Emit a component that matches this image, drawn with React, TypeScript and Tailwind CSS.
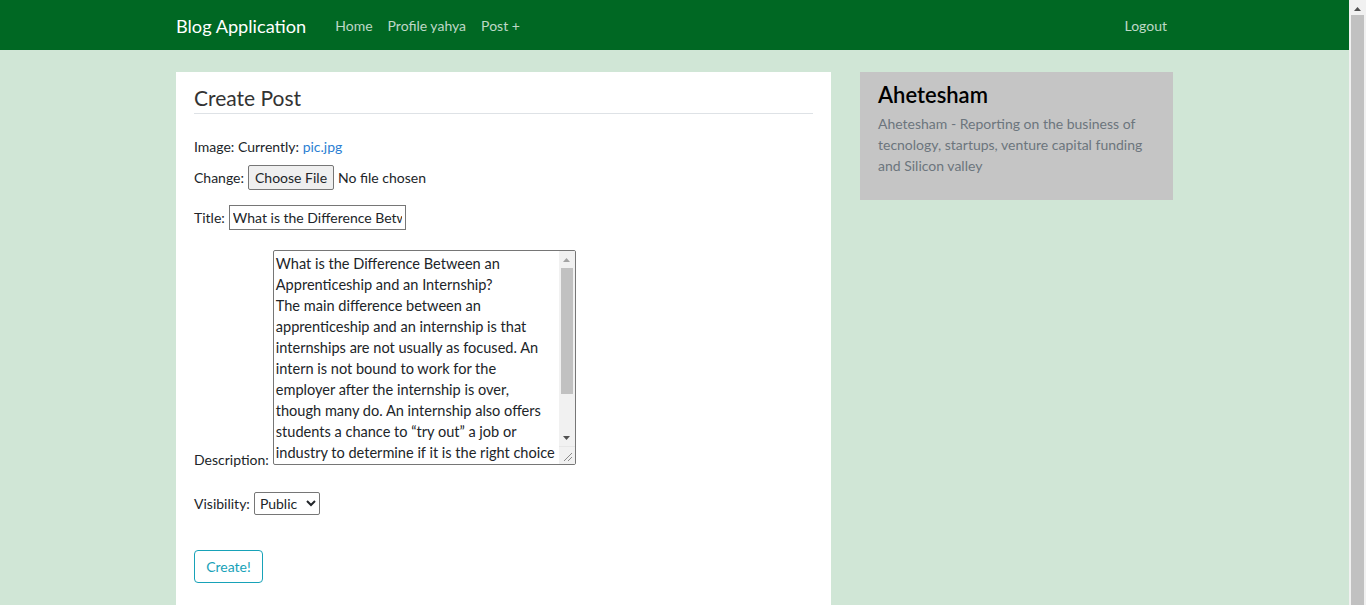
import React from 'react';

const body =
  'What is the Difference Between an Apprenticeship and an Internship?\nThe main difference between an apprenticeship and an internship is that internships are not usually as focused. An intern is not bound to work for the employer after the internship is over, though many do. An internship also offers students a chance to \u201ctry out\u201d a job or industry to determine if it is the right choice for them before committing to it.';

const Arrow = ({ up, color }: { up?: boolean; color: string }) => (
  <svg width="7" height="4" viewBox="0 0 7 4">
    <path d={up ? 'M0 4 L3.5 0 L7 4 Z' : 'M0 0 L3.5 4 L7 0 Z'} fill={color} />
  </svg>
);

const App = () => {
  return (
    <div className="h-screen flex overflow-hidden bg-[#d0e6d6] font-['Lato','Liberation_Sans',sans-serif] text-[14px] text-[#212529]">
      <div className="flex-1 min-w-0">
        <nav className="h-[50px] bg-[#006823]">
          <div className="w-[997px] mx-auto h-full flex items-center pt-[3px]">
            <span className="text-[18.2px] text-white">Blog Application</span>
            <div className="ml-[29px] mb-[2px] flex gap-[15px] text-white/75">
              <span>Home</span>
              <span>Profile yahya</span>
              <span>Post +</span>
            </div>
            <span className="ml-auto mr-[6px] mb-[2px] text-white/75">Logout</span>
          </div>
        </nav>

        <div className="w-[997px] mx-auto flex gap-[29px] pt-[22px]">
          <main className="w-[655px] min-h-[560px] bg-white px-[18px] pt-[12px]">
            <h2 className="text-[21px] leading-[27px] pb-[2px] border-b border-[#dee2e6] text-[#333]">Create Post</h2>

            <form className="flex flex-col items-start">
              <p className="mt-[22px] leading-[21px]">
                Image: Currently: <a className="text-[#2b7fd3]">pic.jpg</a>
              </p>
              <div className="mt-[8px] flex items-center gap-[4px]">
                <label>Change:</label>
                <input type="file" className="text-[14px] file:mr-[4px] file:h-[25px] file:px-[6px] file:border file:border-[#767676] file:rounded-[2px] file:bg-[#efefef] file:text-[#212529]" />
              </div>
              <div className="mt-[15px] flex items-center gap-[4px]">
                <label>Title:</label>
                <input
                  type="text"
                  defaultValue="What is the Difference Between an Apprenticeship and an Internship?"
                  className="w-[177px] h-[25px] border border-[#767676] px-[3px] text-[14px]"
                />
              </div>
              <div className="mt-[20px] flex items-end gap-[4px]">
                <label className="leading-[21px] -mb-[5px]">Description:</label>
                <div className="w-[303px] h-[215px] border border-[#767676] rounded-[2px] flex overflow-hidden">
                  <textarea
                    defaultValue={body}
                    className="flex-1 h-full p-[2px] text-[14.55px] leading-[21px] resize-none outline-none overflow-hidden"
                  />
                  <div className="w-[16px] flex flex-col items-center bg-[#f1f1f1]">
                    <div className="h-[17px] flex items-center justify-center">
                      <Arrow up color="#a3a3a3" />
                    </div>
                    <div className="w-[12px] h-[126px] bg-[#c1c1c1]" />
                    <div className="flex-1" />
                    <div className="h-[17px] flex items-center justify-center">
                      <Arrow color="#505050" />
                    </div>
                    <div className="w-[16px] h-[18px] flex items-end justify-end bg-[#f1f1f1] border-t border-[#e6e6e6]">
                      <svg width="11" height="11" viewBox="0 0 11 11" className="mb-[2px] mr-[2px]">
                        <path d="M10 2 L2 10 M10 6 L6 10" stroke="#8a8a8a" strokeWidth="1" />
                      </svg>
                    </div>
                  </div>
                </div>
              </div>
              <div className="mt-[27px] flex items-center gap-[4px]">
                <label>Visibility:</label>
                <select className="h-[23px] w-[66px] border border-[#767676] rounded-[2px] text-[14px] px-[1px]" defaultValue="public">
                  <option value="public">Public</option>
                  <option value="private">Private</option>
                </select>
              </div>
              <button type="button" className="mt-[35px] w-[69px] h-[33px] border border-[#17a2b8] rounded-[4px] text-[#17a2b8] text-[14px]">
                Create!
              </button>
            </form>
          </main>

          <aside className="w-[313px] h-[128px] bg-[#c5c5c5] px-[18px] pt-[9px]">
            <h3 className="text-[22px] leading-[28px] font-semibold text-black">Ahetesham</h3>
            <p className="mt-[4px] leading-[21px] text-[#6c757d]">
              Ahetesham - Reporting on the business of tecnology, startups, venture capital funding and Silicon valley
            </p>
          </aside>
        </div>
      </div>

      <div className="w-[17px] flex flex-col items-center bg-[#f1f1f1]">
        <div className="h-[15px] flex items-center justify-center pt-[2px]">
          <Arrow up color="#505050" />
        </div>
        <div className="w-[13px] flex-1 bg-[#c1c1c1]" />
      </div>
    </div>
  );
};

export default App;
